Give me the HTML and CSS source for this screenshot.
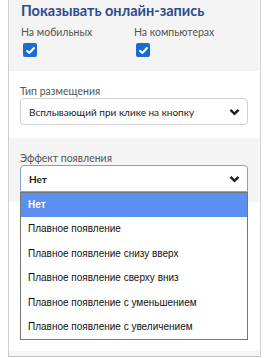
FILE: index.html
```html
<!DOCTYPE html>
<html lang="ru">
<head>
  <meta charset="UTF-8" />
  <meta name="viewport" content="width=device-width, initial-scale=1" />
  <title>Онлайн-запись</title>
  <link rel="stylesheet" href="styles.css">
</head>
<body>
  <div class="panel">
    <div class="section gray first">
      <h3 class="title">Показывать онлайн-запись</h3>
      <div class="devices">
        <div class="device">
          <span class="label">На мобильных</span>
          <span class="check"><svg width="11" height="11" viewBox="0 0 11 11"><path d="M2 5.8 L4.4 8 L9 3" fill="none" stroke="#fff" stroke-width="2" stroke-linecap="round" stroke-linejoin="round"/></svg></span>
        </div>
        <div class="device">
          <span class="label">На компьютерах</span>
          <span class="check"><svg width="11" height="11" viewBox="0 0 11 11"><path d="M2 5.8 L4.4 8 L9 3" fill="none" stroke="#fff" stroke-width="2" stroke-linecap="round" stroke-linejoin="round"/></svg></span>
        </div>
      </div>
    </div>

    <div class="section">
      <div class="label">Тип размещения</div>
      <div class="select">
        <span>Всплывающий при клике на кнопку</span>
        <svg class="chevron" width="11" height="8" viewBox="0 0 11 8"><path d="M1.5 1.8 L5.5 5.8 L9.5 1.8" fill="none" stroke="#1f1f1f" stroke-width="2.4"/></svg>
      </div>
    </div>

    <div class="section gray">
      <div class="label">Эффект появления</div>
      <div class="select-wrap">
        <div class="select open">
          <span>Нет</span>
          <svg class="chevron" width="11" height="8" viewBox="0 0 11 8"><path d="M1.5 1.8 L5.5 5.8 L9.5 1.8" fill="none" stroke="#1f1f1f" stroke-width="2.4"/></svg>
        </div>
        <ul class="options">
          <li class="active">Нет</li>
          <li>Плавное появление</li>
          <li>Плавное появление снизу вверх</li>
          <li>Плавное появление сверху вниз</li>
          <li>Плавное появление с уменьшением</li>
          <li>Плавное появление с увеличением</li>
        </ul>
      </div>
    </div>

    <div class="spacer"></div>
    <div class="strip"></div>
  </div>
</body>
</html>
```

FILE: styles.css
```css
body {
  margin: 0 8px;
  font-family: Lato, 'Open Sans', sans-serif;
  background: #fff;
  color: #222;
}

.panel {
  border-left: 1px solid #cfcfcf;
  border-right: 1px solid #cfcfcf;
  border-bottom: 1px solid #c4c4c4;
}

.section {
  padding: 14px 11px 13px 11px;
  margin-right: 1px;
}

.section.gray {
  background: #f4f4f4;
  padding-bottom: 10px;
}

.section.first {
  padding: 2px 12px 14px 12px;
}

.title {
  margin: 0;
  font-size: 14.5px;
  line-height: 18px;
  font-weight: 700;
  color: #2d4c8c;
}

.devices {
  display: flex;
  margin-top: 6px;
}

.device {
  display: flex;
  flex-direction: column;
  align-items: flex-start;
  width: 114px;
}

.label {
  font-size: 10.5px;
  line-height: 13px;
  color: #555;
}

.check {
  display: flex;
  align-items: center;
  justify-content: center;
  width: 14px;
  height: 14px;
  margin: 4px 0 0 2px;
  background: #1a6dcf;
  border-radius: 2px;
}

.select {
  display: flex;
  align-items: center;
  justify-content: space-between;
  height: 25px;
  padding: 0 4px 0 8px;
  background: #fff;
  border: 1px solid #d2d2d2;
  border-radius: 4px;
  font-size: 10px;
  color: #1a1a1a;
}

.select.open {
  border-color: #7ea3d8;
  border-radius: 4px 4px 0 0;
  font-weight: 700;
}

.chevron {
  margin-right: 3px;
}

.select-wrap {
  position: relative;
}

.options {
  position: absolute;
  top: 100%;
  left: 0;
  right: 0;
  margin: 0;
  padding: 0;
  list-style: none;
  background: #fff;
  border: 1px solid #767676;
  font-family: 'Liberation Sans', Arial, sans-serif;
  font-size: 10px;
  color: #111;
  z-index: 2;
}

.options li {
  height: 24.4px;
  line-height: 24px;
  padding-left: 7px;
}

.options li.active {
  background: #5b8ff0;
  color: #fff;
  font-weight: 700;
}

.spacer {
  height: 149px;
}

.strip {
  height: 5px;
  background: #f6f6f6;
}
```
